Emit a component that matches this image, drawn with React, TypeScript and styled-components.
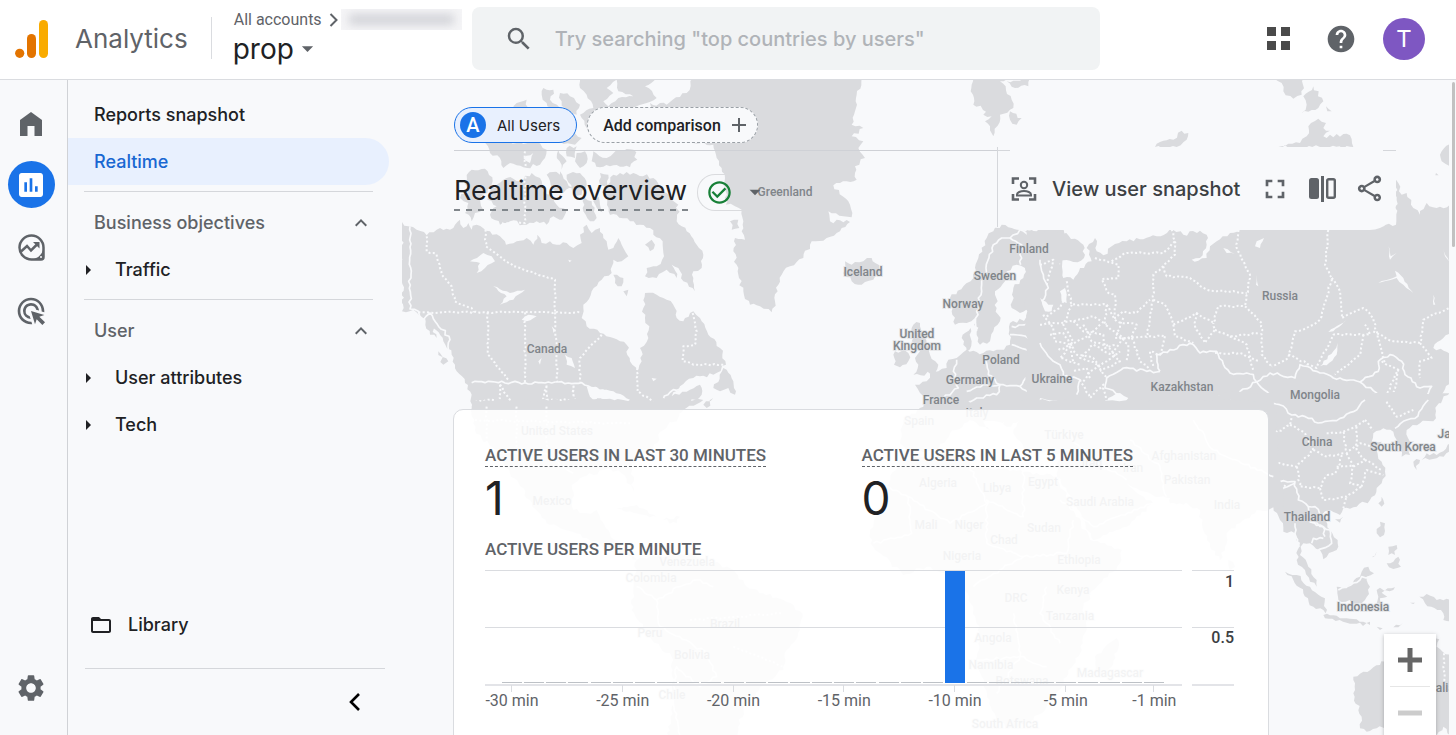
import React from 'react';
import styled, { createGlobalStyle, css } from 'styled-components';
import {
  MdAdd,
  MdAdsClick,
  MdArrowDropDown,
  MdArrowRight,
  MdCheckCircleOutline,
  MdExpandLess,
  MdFolderOpen,
  MdFullscreen,
  MdHelp,
  MdInsertChart,
  MdOutlineShare,
  MdSearch,
  MdSettings,
} from 'react-icons/md';

const color = {
  ink: '#202124',
  muted: '#5f6368',
  line: '#dadce0',
  water: '#f8f9fb',
  land: '#dadbde',
  blue: '#1a73e8',
  tint: '#e8f0fe',
};

const brandFont = "'Google Sans', Inter, sans-serif";
const textFont = 'Roboto, sans-serif';

const GlobalStyle = createGlobalStyle`
  *, *::before, *::after { box-sizing: border-box; }
  body {
    margin: 0;
    overflow: hidden;
    background: ${color.water};
    color: ${color.ink};
    font-family: ${textFont};
  }
  button, input { font: inherit; color: inherit; }
  button { border: 0; padding: 0; background: none; cursor: pointer; }
  a { color: inherit; text-decoration: none; }
  h1, h2, h3, p, ul { margin: 0; padding: 0; font-weight: inherit; list-style: none; }
  svg { display: block; flex: none; }
`;

/* ---------- map ---------- */

type Point = [number, number];

const parse = (s: string): Point[] => s.split(' ').map((p) => p.split(',').map(Number) as Point);

/* Breaks long straight edges into small irregular steps so coasts look natural. */
const jag = (points: Point[], amount: number): Point[] => {
  const out: Point[] = [];
  points.forEach((a, i) => {
    out.push(a);
    const b = points[i + 1];
    if (!b) return;
    const dx = b[0] - a[0];
    const dy = b[1] - a[1];
    const len = Math.hypot(dx, dy);
    const steps = Math.min(40, Math.floor(len / 10));
    for (let k = 1; k < steps; k += 1) {
      const x = a[0] + (dx * k) / steps;
      const y = a[1] + (dy * k) / steps;
      const n = Math.sin(x * 12.9898 + y * 78.233) * 43758.5453;
      const off = (n - Math.floor(n) - 0.5) * amount;
      out.push([x - (dy / len) * off, y + (dx / len) * off]);
    }
  });
  return out;
};

const shape = (s: string, amount = 12) => {
  const p = parse(s);
  return `M${jag([...p, p[0]], amount).map((q) => q.map(Math.round).join(' ')).join('L')}Z`;
};
const line = (s: string, amount = 6) =>
  `M${jag(parse(s), amount).map((q) => q.map(Math.round).join(' ')).join('L')}`;

interface Region {
  origin: Point;
  land: string[];
  water?: string[];
  borders?: string[];
  dotted?: string[];
}

const regions: Region[] = [
  {
    origin: [400, 78],
    land: [
      '6,432 25,445 50,455 80,472 110,455 150,455 165,440 180,425 190,450 205,435 215,455 230,440 270,460 300,475 318,500 350,490 380,480 400,500 412,470 425,495 450,490 470,500 500,495 520,510 545,495 540,470 560,440 575,465 600,450 610,480 625,515 640,510 655,480 670,510 685,535 665,550 640,545 635,585 605,605 575,640 550,680 545,720 560,745 600,765 640,780 680,800 690,850 715,875 725,850 720,810 745,780 748,745 735,720 730,690 735,645 770,650 800,665 825,690 830,720 850,730 880,700 900,720 925,770 960,810 978,860 940,890 880,900 840,925 815,955 870,935 900,920 905,950 870,975 840,990 830,1030 225,1030 215,990 215,950 195,915 170,880 155,830 130,790 100,750 60,715 40,695 6,700',
      '190,310 215,275 255,272 278,310 262,345 240,360 250,395 225,405 215,430 195,405 205,375 180,360 205,335',
      '275,330 320,300 360,310 395,285 420,300 430,340 455,350 470,380 500,395 490,425 460,415 440,440 410,430 380,440 330,430 300,440 270,410 290,385 262,365',
      '250,190 300,180 350,195 410,190 440,215 420,260 370,268 330,255 310,270 300,240 270,225',
      '350,75 380,65 385,90 350,100 340,85',
      '430,30 460,35 450,65 480,90 460,110 440,75 425,50',
      '480,45 510,55 540,80 530,110 500,100 485,70',
      '440,125 500,115 520,160 545,180 525,200 470,190 450,160',
      '500,210 530,205 525,240 500,235',
      '530,225 555,220 560,255 540,270 525,250',
      '580,220 620,240 650,215 700,215 712,245 690,268 640,262 600,268 575,250',
      '475,215 500,250 485,275 470,240',
      '440,290 480,280 500,310 520,330 490,345 455,330',
      '500,290 540,285 560,320 545,350 520,345',
      '600,285 625,290 620,330 600,320',
      '540,0 780,0 735,25 770,60 740,75 700,90 690,130 650,190 600,185 560,150 540,110 580,90 560,50 540,30',
      '640,290 700,285 760,300 800,345 835,380 830,430 860,460 890,500 910,530 905,570 880,580 885,640 850,610 835,570 815,560 830,600 800,575 770,600 735,595 740,570 770,565 792,535 788,490 760,470 750,450 720,440 690,430 650,410 600,400 580,370 610,340',
      '545,350 575,370 590,420 570,430 550,400',
      '735,500 755,485 765,500 750,520',
      '640,590 670,600 665,625 645,615',
      '670,640 685,635 680,655',
      '940,930 970,870 1000,910 1005,950 985,930 960,940',
      '75,720 95,740 110,780 90,770',
      '115,820 145,850 130,860',
      '910,980 940,960 920,990',
    ],
    water: [
      '210,550 250,525 275,535 285,550 255,570 230,585 240,555',
      '280,625 330,645 375,635 340,665 300,680 320,655',
      '495,830 515,840 525,870 500,860',
      '365,725 385,710 410,715 380,730',
      '560,925 640,940 690,965 670,985 640,965 590,960 620,990 580,975',
      '620,30 650,5 655,40 700,55 655,60 625,85 610,70 640,45',
      '480,440 500,400 525,410 520,450 500,470',
      '590,330 615,350 640,440 615,430 600,380',
      '370,240 400,225 390,255',
      '455,210 470,240 480,290 460,270',
      '455,745 465,755 460,765',
      '415,850 425,840 420,860',
      '755,900 770,902 760,910',
      '505,545 515,548 508,553',
    ],
    borders: [
      '30,445 30,693 55,700 70,725 90,705 150,785 145,815',
      '215,914 545,914 575,930 640,950',
      '650,975 700,985 770,978 820,935 860,925',
    ],
    dotted: [
      '80,475 80,520 110,530 125,590 155,625 165,670 215,690 220,703',
      '55,703 545,703',
      '256,455 258,505 340,565 465,605 465,703',
      '263,703 264,830 325,905',
      '375,703 375,912',
      '465,703 472,912',
      '605,770 540,840 540,912',
      '375,220 375,435 300,435',
      '878,705 890,760 885,800 850,805 848,850 880,860 975,860',
      '712,870 712,940 765,975',
      '300,920 300,965 220,970',
      '300,920 340,985 420,985 440,920 440,985',
      '440,965 520,965 520,920 525,996',
    ],
  },
  {
    origin: [700, 78],
    land: [
      '-20,0 -40,45 -100,80 -150,75 -100,130 -60,190 40,200 50,240 65,270 75,300 78,380 105,385 125,395 130,430 125,460 135,485 105,480 100,520 110,560 115,590 130,640 150,680 180,685 215,703 225,670 235,620 245,590 270,565 310,540 335,490 380,480 420,460 450,432 390,430 385,400 430,415 455,418 450,380 400,322 440,310 470,305 465,265 495,240 475,210 490,190 455,175 490,150 455,140 465,100 470,50 485,0',
      '90,430 115,425 118,450 95,455',
      '435,550 455,560 465,552 490,550 515,540 545,580 520,605 485,620 455,610 430,585',
      '820,0 930,0 900,10 935,65 940,90 900,110 880,175 855,130 875,115 850,110 870,100 820,80 815,20',
      '930,100 965,120 950,140 930,125',
      '920,10 990,0 985,25 945,30',
      '750,660 790,625 820,600 835,540 860,480 880,460 905,440 935,450 985,460 1090,450 1090,1030 685,1030 690,960 660,945 645,920 680,910 690,885 715,880 740,870 745,845 770,840 800,815 850,825 900,815 930,800 930,735 1000,715 1040,700 1010,690 960,705 935,690 940,630 970,600 975,570 950,560 920,580 915,610 885,640 890,690 900,730 880,760 870,790 840,800 830,760 825,720 800,735 765,740 755,700',
      '788,770 812,750 815,790 800,822 790,800',
      '640,740 660,735 665,765 680,800 690,830 715,860 705,885 640,890 655,860 645,840 660,820 635,790',
      '585,820 625,825 625,850 600,868 582,860',
    ],
    water: [
      '1005,475 1020,460 1035,480 1020,490',
      '1020,670 1060,665 1055,690 1035,690',
      '990,960 1040,965 1080,980 1080,996 1010,996',
    ],
    borders: [
      '830,760 830,700 845,620 880,500 905,480 930,480 965,500 962,560',
      '930,480 960,455 1000,485 1020,500 1035,560 1050,630 1020,690',
      '770,845 760,880 775,930 730,960',
      '855,830 865,890 900,920 960,925 1005,870 990,820 935,800',
      '1005,870 1060,860',
      '930,770 985,780 1000,800 1035,790',
      '935,745 1000,740 1000,715',
      '800,940 850,920 900,920 890,950 830,960 790,975',
      '960,925 1010,960 980,975 900,985',
    ],
    dotted: ['1010,740 1045,770 1080,720', '1035,530 1080,560'],
  },
  {
    origin: [1040, 78],
    land: [
      '-40,456 60,458 130,500 132,540 100,552 40,540 60,560 70,600 100,605 120,570 155,550 140,510 165,480 170,520 190,532 215,505 260,490 350,475 400,456 430,470 480,458 500,470 500,500 480,540 455,545 475,548 500,540 510,505 530,490 570,465 600,456 700,440 870,440 1068,440 1068,305 1085,350 1100,345 1120,390 1140,410 1160,375 1190,390 1240,380 1240,750 1180,810 1240,830 1240,900 1200,950 1180,1030 -40,1030',
      '700,0 790,0 785,50 760,62 730,40 725,15',
      '790,55 820,25 850,70 835,90 785,105 800,80',
      '858,85 875,100 862,100',
      '345,207 360,192 400,185 425,158 445,165 440,185 410,207',
      '715,207 745,197 780,195 800,175 805,145 835,122 858,135 850,150 870,158 850,175 930,172 940,207',
      '1205,220 1230,198 1230,265 1205,250',
      '1188,285 1196,292 1186,292',
    ],
    water: [
      '650,490 672,480 660,510 645,505',
      '550,510 585,528 560,525',
      '840,865 880,820 893,795 890,830 860,862',
      '1065,578 1090,600 1120,645 1090,620 1070,600 1015,615 1070,595',
      '865,762 920,725 880,760',
      '60,640 75,630 80,675 65,670',
      '0,660 25,680 40,680 35,700 15,700',
      '495,955 555,953 510,960 505,978',
      '205,960 240,945 265,960 240,996 195,996',
      '0,960 60,970 100,985 90,996 0,996',
      '648,590 655,625 648,620',
      '1045,505 1052,535 1070,525 1050,545',
      '1180,650 1186,680 1180,680',
      '1210,510 1227,550 1215,535',
      '215,460 232,458 225,480',
    ],
    borders: [
      '0,545 10,590 25,630 5,670',
      '0,795 40,850 60,860 70,895 120,905 110,950',
      '360,880 350,830 390,815 450,795 480,825 530,820 570,885 640,890 650,912',
      '360,880 320,880 250,870 200,900 195,930 240,950',
      '650,912 600,940 570,990',
      '650,912 690,950 695,980 740,995',
      '650,912 690,885 765,900 780,860 830,880 880,900 960,912 1015,880 1015,850 1050,830 1085,850 1095,890 1140,930 1175,925 1150,980',
      '960,912 1010,945 960,965 920,990',
    ],
    dotted: [
      '165,540 235,560 235,600 185,603 205,645 225,650 225,720 250,700 290,705 330,665',
      '215,550 260,525 370,525 405,490 395,455',
      '405,490 405,530 340,590 340,665 320,780',
      '370,565 380,595 450,600 500,635 620,645',
      '340,665 375,680 400,740 470,705 520,735 535,685 615,685',
      '595,456 590,510 630,590 615,685',
      '615,685 665,735 665,830 695,865',
      '865,456 855,560 875,600 860,660 840,725 800,750 765,760 745,840 695,865',
      '875,600 900,640 905,720 970,690 1000,720 1035,860',
      '400,740 405,775 460,795',
      '470,705 465,745 495,795 525,755 520,735',
      '525,755 570,775 660,765',
      '570,775 620,800 640,880',
      '525,825 600,825 660,850',
      '745,830 830,870 880,770 990,770 975,740',
      '970,770 960,830 885,890',
      '1000,760 1060,790 1140,795 1150,725 1227,690',
      '1140,795 1175,840 1140,850 1140,900',
      '1025,850 1075,875 1040,950 1060,990',
      '80,610 95,680 200,680 195,740 250,780 375,775',
      '0,740 100,730 160,715 200,740',
      '95,680 70,740 100,790 60,840 120,860',
      '130,740 155,790 200,800 240,850 180,880',
      '250,780 215,830 160,800 120,840 180,860',
      '275,780 300,850 325,870',
      '375,775 360,830 330,820 340,870',
      '20,715 60,690 80,650',
      '100,730 130,760 190,770 195,810 230,800',
      '30,770 70,765 110,830 160,840 200,900',
      '120,905 150,960 190,920 200,980',
      '1075,875 1060,960 1130,990',
      '0,560 40,545 20,620',
      '200,680 230,730 290,740 275,780 225,780',
      '10,710 40,750 45,790 90,800 100,850',
      '150,900 140,870 100,880',
      '130,910 150,880 200,850 240,820',
      '180,740 150,770 110,790 50,820',
      '250,720 230,770 265,800 260,850',
    ],
  },
  {
    origin: [1180, 400],
    land: [
      '-30,-20 810,-20 765,20 740,45 720,70 680,90 690,125 690,165 665,170 650,120 640,95 610,85 580,100 575,125 605,125 590,150 605,185 615,215 605,250 570,300 530,320 490,325 480,345 450,330 425,345 450,390 473,420 470,450 430,478 420,450 390,430 370,430 360,465 385,500 410,540 410,560 390,545 375,510 350,480 358,440 345,400 310,395 300,360 280,320 270,300 240,310 -30,310',
      '315,515 350,525 390,560 435,595 437,640 400,620 370,580 340,540',
      '430,645 500,655 570,665 570,675 500,668 435,655',
      '470,560 500,565 540,530 545,515 565,500 582,520 560,530 570,560 555,600 530,610 475,600',
      '590,570 645,562 640,570 605,578 622,590 600,595 610,620 590,610',
      '600,365 615,370 612,405 600,412 590,400',
      '620,490 640,485 655,470 663,500 640,507',
      '625,440 650,435 645,465 625,465',
      '575,472 590,455 582,470',
      '718,590 740,582 770,600 820,600 820,668 790,660 790,640 735,610',
      '520,830 550,815 600,795 640,760 700,725 730,740 765,715 778,718 770,740 820,770 820,1030 790,980 770,1005 700,1010 620,975 590,985 560,995 540,985 545,950 520,880',
      '595,310 605,290 610,300 605,320',
      '465,358 490,350 480,368',
      '700,185 720,180 710,210',
      '725,180 740,160 770,165 820,120 820,155 770,175',
      '590,680 608,685 600,690',
      '640,682 668,670 655,682',
      '690,608 705,608 700,612',
    ],
    borders: [
      '265,8 310,18 335,45 385,55 425,68 480,55 520,35 555,0',
      '645,85 680,60 705,55 745,0',
      '265,265 300,245 345,245 355,300 385,320 405,320 430,350',
      '385,320 390,365 430,380 435,410',
      '390,365 450,390 455,430 410,455',
      '345,370 345,400 358,440',
      '395,430 400,415 430,415',
      '475,570 500,560 540,540 545,530 570,530',
      '150,0 155,20 175,15',
      '260,285 300,270 345,250',
    ],
    dotted: [
      '265,110 330,75 335,50',
      '330,75 370,95 400,150 350,200 265,185',
      '350,200 360,260 420,265 440,225',
      '400,150 440,170 490,160 465,220 440,225',
      '420,265 430,300 500,290 545,260',
      '440,100 490,95 500,160 540,130 580,140',
      '490,95 525,80 555,60',
      '500,160 520,200 510,250 545,260',
      '520,200 560,180 605,210',
      '545,260 560,210 610,225',
      '490,325 500,290',
      '555,60 580,90',
      '530,80 530,150 555,180',
      '620,5 650,50 700,30',
      '470,200 520,195',
      '792,760 792,860',
      '265,300 300,280 320,250',
    ],
  },
  {
    origin: [450, 400],
    land: [
      '65,20 75,0 760,0 700,30 640,90 600,150 545,190 550,275 515,220 480,205 400,230 365,255 370,330 410,340 440,330 480,400 510,440 560,480 470,440 380,400 290,370 240,300 180,220 140,160 75,90',
      '500,325 560,315 620,350 560,340',
      '640,360 690,350 680,370',
      '560,480 620,470 720,460 850,510 890,560 1000,600 1057,640 1050,690 1010,750 1000,810 930,860 880,930 850,1030 650,1030 670,900 665,770 600,710 545,630 550,580',
    ],
    borders: [
      '560,560 620,600 690,560 740,540 790,560',
      '620,600 630,680 690,710',
      '690,710 770,760 800,830 750,860 680,800 670,900 690,1005',
      '140,160 290,160 370,220',
    ],
    dotted: ['110,20 110,130', '200,20 200,140', '290,20 290,150', '75,60 540,70', '720,660 1000,640', '850,740 1000,800'],
  },
  {
    origin: [840, 400],
    land: [
      '180,130 190,60 250,20 260,0 380,0 450,90 390,60 330,100 290,150 200,150',
      '460,0 1300,0 1330,320 1250,330 1200,370 1160,400 1160,430 1140,480 1110,440 1090,390 1080,330 1010,295 960,290 890,265 860,250 900,285 940,310 860,380 760,420 700,300 650,220 660,160 560,150 520,100 540,60 500,80',
      '180,180 300,165 380,170 390,200 440,205 520,210 640,230 670,270 700,330 750,420 845,450 840,490 770,560 730,620 740,690 720,760 680,830 640,900 580,960 510,985 470,960 450,900 410,800 420,700 400,620 370,560 330,530 260,500 190,525 100,440 90,400 110,330 140,260',
      '765,770 830,715 835,745 800,830 770,820',
      '1165,480 1185,500 1170,510',
    ],
    borders: [
      '140,260 205,290 330,370 440,310 390,200',
      '550,210 550,350 440,300 440,430',
      '205,290 215,400 100,430',
      '440,430 550,470 680,460 700,360',
      '550,470 480,510 400,560',
      '620,560 600,640 660,730',
      '410,780 540,770 620,800',
      '660,300 760,380 940,310',
      '680,100 760,180 860,240',
      '870,120 960,200 980,290',
      '1060,60 1120,150 1300,230',
      '520,640 540,770 470,880',
    ],
  },
];

const labels: [number, number, string][] = [
  [785, 196, 'Greenland'],
  [863, 276, 'Iceland'],
  [1029, 253, 'Finland'],
  [995, 280, 'Sweden'],
  [963, 308, 'Norway'],
  [917, 338, 'United'],
  [917, 350, 'Kingdom'],
  [1001, 364, 'Poland'],
  [970, 384, 'Germany'],
  [941, 404, 'France'],
  [1052, 383, 'Ukraine'],
  [1280, 300, 'Russia'],
  [1182, 391, 'Kazakhstan'],
  [1315, 399, 'Mongolia'],
  [547, 353, 'Canada'],
  [1317, 446, 'China'],
  [1403, 451, 'South Korea'],
  [1454, 438, 'Japan'],
  [1307, 521, 'Thailand'],
  [1363, 611, 'Indonesia'],
  [1431, 692, 'Australia'],
  [557, 435, 'United States'],
  [552, 505, 'Mexico'],
  [687, 566, 'Venezuela'],
  [651, 582, 'Colombia'],
  [725, 628, 'Brazil'],
  [650, 637, 'Peru'],
  [692, 659, 'Bolivia'],
  [672, 699, 'Chile'],
  [919, 425, 'Spain'],
  [977, 417, 'Italy'],
  [1064, 439, 'Türkiye'],
  [1092, 467, 'Iraq'],
  [1133, 472, 'Iran'],
  [1184, 460, 'Afghanistan'],
  [1187, 484, 'Pakistan'],
  [1227, 509, 'India'],
  [938, 487, 'Algeria'],
  [997, 492, 'Libya'],
  [1043, 486, 'Egypt'],
  [1100, 506, 'Saudi Arabia'],
  [926, 529, 'Mali'],
  [969, 529, 'Niger'],
  [1004, 544, 'Chad'],
  [1044, 532, 'Sudan'],
  [962, 560, 'Nigeria'],
  [1079, 564, 'Ethiopia'],
  [1073, 594, 'Kenya'],
  [1016, 602, 'DRC'],
  [1070, 620, 'Tanzania'],
  [993, 642, 'Angola'],
  [991, 669, 'Namibia'],
  [1022, 685, 'Botswana'],
  [1110, 677, 'Madagascar'],
  [1005, 728, 'South Africa'],
];

const MapSvg = styled.svg`
  position: absolute;
  inset: 0 7px 0 0;
  width: calc(100% - 7px);
  height: 100%;
  pointer-events: none;

  text {
    font: 500 12px ${textFont};
    fill: #80858a;
    text-anchor: middle;
    stroke: ${color.land};
    stroke-width: 2px;
    stroke-opacity: 0.6;
    paint-order: stroke;
  }
`;

const WorldMap = () => (
  <MapSvg viewBox="402 80 1047 655" preserveAspectRatio="xMinYMin slice" aria-hidden="true">
    {regions.map((r, i) => (
      <g key={i} transform={`translate(${r.origin[0]} ${r.origin[1]}) scale(0.33333)`}>
        <path d={r.land.map((s) => shape(s)).join('')} fill={color.land} fillRule="nonzero" />
        {r.water?.map((s) => <path key={s} d={shape(s, 6)} fill={color.water} />)}
        <g fill="none" stroke={color.water} strokeLinejoin="round">
          {r.borders?.map((s) => <path key={s} d={line(s, 9)} strokeWidth={5} />)}
          {r.dotted?.map((s) => <path key={s} d={line(s, 5)} strokeWidth={6} strokeDasharray="6 7" />)}
        </g>
      </g>
    ))}
    {labels.map(([x, y, t]) => (
      <text key={`${t}${y}`} x={x} y={y}>{t}</text>
    ))}
  </MapSvg>
);

/* ---------- header ---------- */

const Page = styled.div`
  display: flex;
  flex-direction: column;
  height: 100vh;
`;

const Header = styled.header`
  display: flex;
  align-items: center;
  flex: none;
  height: 80px;
  padding: 0 31px 2px 15px;
  background: #fff;
  border-bottom: 1px solid ${color.line};
`;

const Brand = styled.a`
  display: flex;
  align-items: center;
  gap: 26px;
  font: 400 26px/36px ${brandFont};
  color: ${color.muted};
`;

const Account = styled.div`
  display: flex;
  flex-direction: column;
  width: 261px;
  height: 60px;
  margin-left: 23px;
  position: relative;

  &::before {
    content: '';
    position: absolute;
    top: 8px;
    left: 0;
    height: 42px;
    border-left: 1px solid ${color.line};
  }
`;

const Crumbs = styled.div`
  display: flex;
  align-items: center;
  height: 22px;
  padding-left: 23px;
  font-size: 16px;
  color: ${color.muted};

  svg { margin: 0 3px 0 7px; }
`;

const HiddenName = styled.span`
  width: 121px;
  height: 21px;
  overflow: hidden;
  background: #f5f5f7;

  &::before {
    content: '';
    display: block;
    height: 11px;
    margin: 5px 8px;
    background: #d2d3d8;
    filter: blur(5px);
  }
`;

const PropertyButton = styled.button`
  display: flex;
  align-items: center;
  align-self: flex-start;
  padding-left: 22px;
  font: 400 28px/36px ${brandFont};

  svg { color: ${color.muted}; }
`;

const SearchBox = styled.label`
  display: flex;
  align-items: center;
  flex: 0 1 628px;
  height: 63px;
  padding: 0 32px;
  gap: 21px;
  border-radius: 8px;
  background: #f1f3f4;
  color: ${color.muted};
`;

const SearchInput = styled.input`
  flex: 1;
  min-width: 0;
  padding: 0;
  border: 0;
  outline: 0;
  background: transparent;
  font: 500 20px ${brandFont};

  &::placeholder { color: #b0b3b8; opacity: 1; }
`;

const HeaderActions = styled.div`
  display: flex;
  align-items: center;
  gap: 26px;
  margin-left: auto;
  color: ${color.muted};

  button:first-child { margin-right: 8px; }
`;

const Avatar = styled.button`
  width: 42px;
  height: 42px;
  border-radius: 50%;
  background: #7e57c2;
  font: 400 24px ${textFont};
  color: #fff;
`;

/* ---------- rail and navigation ---------- */

const Body = styled.div`
  display: flex;
  flex: 1;
  min-height: 0;
`;

const Rail = styled.nav`
  display: flex;
  flex-direction: column;
  align-items: center;
  gap: 16px;
  flex: none;
  width: 68px;
  padding: 18px 5px 24px 0;
  border-right: 1px solid #d0d2d6;
`;

const RailButton = styled.button<{ $active?: boolean; $last?: boolean }>`
  display: grid;
  place-items: center;
  width: 47px;
  height: 47px;
  border-radius: 50%;
  color: ${(p) => (p.$active ? '#fff' : color.muted)};
  background: ${(p) => (p.$active ? color.blue : 'transparent')};
  ${(p) => p.$last && css`margin-top: auto;`}
`;

const SideNav = styled.nav`
  display: flex;
  flex-direction: column;
  flex: none;
  width: 334px;
  padding-top: 11px;
  font: 500 18px ${brandFont};
`;

const NavLink = styled.a<{ $active?: boolean }>`
  display: flex;
  align-items: center;
  height: 47px;
  margin-right: 13px;
  padding-left: 26px;
  border-radius: 0 24px 24px 0;
  color: ${(p) => (p.$active ? '#1967d2' : color.ink)};
  background: ${(p) => (p.$active ? color.tint : 'transparent')};
`;

const NavSection = styled.section`
  margin: 6px 29px 0 16px;
  padding-top: 7px;
  border-top: 1px solid #d5d7db;
`;

const SectionHead = styled.button`
  display: flex;
  align-items: center;
  justify-content: space-between;
  width: 100%;
  height: 47px;
  padding-left: 10px;
  color: ${color.muted};
`;

const Branch = styled.button`
  display: flex;
  align-items: center;
  gap: 15px;
  width: 100%;
  height: 47px;
  margin-left: -8px;
`;

const LibraryLink = styled.a`
  display: flex;
  align-items: center;
  gap: 15px;
  height: 47px;
  margin: auto 17px 0;
  padding-left: 4px;
`;

const NavFoot = styled.div`
  display: flex;
  justify-content: flex-end;
  align-items: center;
  height: 67px;
  margin: 20px 17px 0;
  padding-right: 24px;
  border-top: 1px solid #d5d7db;
`;

/* ---------- report ---------- */

const Main = styled.main`
  position: relative;
  flex: 1;
  min-width: 0;
  overflow: hidden;
  padding: 27px 60px 0 52px;
`;

const ScrollThumb = styled.div`
  position: absolute;
  top: 2px;
  right: 1px;
  width: 3px;
  height: 165px;
  border-radius: 2px;
  background: #c1c1c1;
`;

const Chips = styled.div`
  position: relative;
  display: flex;
  gap: 10px;
  height: 36px;
`;

const Chip = styled.button<{ $add?: boolean }>`
  display: flex;
  align-items: center;
  gap: ${(p) => (p.$add ? '6px' : '11px')};
  padding: ${(p) => (p.$add ? '0 6px 0 15px' : '0 16px 0 5px')};
  border: 1px ${(p) => (p.$add ? 'dashed #9aa0a6' : `solid ${color.blue}`)};
  border-radius: 18px;
  background: ${(p) => (p.$add ? color.water : color.tint)};
  font: ${(p) => (p.$add ? `500 16px ${textFont}` : `400 15px ${brandFont}`)};

  svg { color: ${color.muted}; }
`;

const ChipBadge = styled.span`
  display: grid;
  place-items: center;
  width: 26px;
  height: 26px;
  border-radius: 50%;
  background: ${color.blue};
  font: 500 20px ${textFont};
  color: #fff;
`;

const TitleBar = styled.div`
  position: relative;
  display: flex;
  align-items: flex-start;
  justify-content: space-between;
  margin-top: 7px;
  border-top: 1px solid #cfd1d6;
`;

const TitleGroup = styled.div`
  display: flex;
  align-items: center;
  gap: 8px;
  padding-top: 22px;
`;

const Title = styled.h1`
  height: 38px;
  padding-right: 2px;
  font: 400 27px/36px ${brandFont};
  background: repeating-linear-gradient(90deg, #80868b 0 6px, transparent 6px 12px) 0 100% / 100% 2px no-repeat;
`;

const StatusButton = styled.button`
  display: flex;
  align-items: center;
  gap: 9px;
  height: 37px;
  padding-left: 8px;
  border: solid #dadbde;
  border-width: 1px 0 1px 1px;
  border-radius: 18px 0 0 18px;
  color: ${color.muted};
`;

const Toolbar = styled.div`
  position: relative;
  display: flex;
  align-items: center;
  width: 399px;
  height: 83px;
  margin-top: -4px;
  padding: 0 11px 0 13px;
  border-radius: 0 0 26px 26px;
  background:
    linear-gradient(#d5d7db, #d5d7db) 0 3px / 13px 1px no-repeat,
    linear-gradient(#d5d7db, #d5d7db) 100% 3px / 13px 1px no-repeat,
    ${color.water};
  color: ${color.muted};

  &::before {
    content: '';
    position: absolute;
    top: 0;
    left: 0;
    height: 80px;
    border-left: 1px solid #d5d7db;
  }
`;

const SnapshotButton = styled.button`
  display: flex;
  align-items: center;
  gap: 15px;
  margin-right: auto;
  padding-left: 1px;
  font: 500 20px ${brandFont};
  color: #3c4043;

  svg { color: ${color.muted}; }
`;

const ToolIcons = styled.div`
  display: flex;
  align-items: center;
  gap: 18px;
`;

const Card = styled.section`
  position: relative;
  margin: 179px 127px 0 -1px;
  height: 400px;
  padding: 35px 34px 0 31px;
  border: 1px solid ${color.line};
  border-radius: 10px;
  background: rgba(255, 255, 255, 0.9);
`;

const Metrics = styled.div`
  display: grid;
  grid-template-columns: 1fr 1fr;
  column-gap: 4px;
`;

const Label = styled.h2<{ $help?: boolean }>`
  display: inline-block;
  font: 500 17px/21px ${textFont};
  color: ${color.muted};
  ${(p) => p.$help && css`border-bottom: 1px dashed ${color.muted};`}
`;

const Value = styled.p`
  margin: 4px 0 14px;
  font: 400 46px/54px ${brandFont};
`;

const Chart = styled.svg`
  width: 100%;
  height: auto;
  margin-top: 10px;
  overflow: visible;

  text { font: 400 16px ${textFont}; fill: ${color.muted}; text-anchor: middle; }
  .axis { font-weight: 500; fill: #3c4043; text-anchor: end; }
`;

const ZoomControls = styled.div`
  position: absolute;
  right: 20px;
  top: 554px;
  display: flex;
  flex-direction: column;
  width: 52px;
  background: #fff;
  box-shadow: 0 1px 4px rgba(0, 0, 0, 0.25);
`;

const ZoomButton = styled.button`
  display: grid;
  place-items: center;
  height: 52px;
  color: #666;

  & + & { margin: 0 6px; border-top: 1px solid #e6e6e6; color: #ccc; }
`;

const Logo = () => (
  <svg width="34" height="38" viewBox="0 0 34 38" aria-hidden="true">
    <rect x="24" y="0" width="9" height="38" rx="4.5" fill="#f9ab00" />
    <rect x="12" y="14" width="9" height="24" rx="4.5" fill="#e37400" />
    <circle cx="4.7" cy="33.3" r="4.6" fill="#e37400" />
  </svg>
);

const activity = Array.from({ length: 30 }, (_, i) => ({ minute: 30 - i, users: 30 - i === 10 ? 1 : 0 }));
const barX = (minute: number) => 27 + ((30 - minute) * 443) / 20;

const UsersChart = () => (
  <Chart viewBox="0 0 749 144" role="img" aria-label="Active users per minute">
    {[0, 57, 114].map((y) => (
      <g key={y} fill={y === 114 ? '#e3e4e8' : '#dadce0'}>
        <rect x="0" y={y} width="697" height={y === 114 ? 2 : 1} />
        <rect x="707" y={y} width="42" height={y === 114 ? 2 : 1} />
      </g>
    ))}
    {activity.map(({ minute, users }) => (
      <rect
        key={minute}
        x={Math.round(barX(minute)) - 10}
        y={users ? 1 : 112}
        width="20"
        height={users ? 112 : 1}
        fill={users ? color.blue : '#bdc1c6'}
      />
    ))}
    {[30, 25, 20, 15, 10, 5, 1].map((m) => (
      <g key={m}>
        <rect x={Math.round(barX(m)) - 1} y="115" width="1" height="7" fill="#dadce0" />
        <text x={barX(m)} y="136">{`-${m} min`}</text>
      </g>
    ))}
    <text className="axis" x="749" y="17">1</text>
    <text className="axis" x="749" y="73">0.5</text>
  </Chart>
);

const App = () => (
  <Page>
    <GlobalStyle />
    <Header>
      <Brand href="#home"><Logo />Analytics</Brand>
      <Account>
        <Crumbs>
          All accounts
          <svg width="9" height="14" viewBox="0 0 9 14" fill="none" stroke="currentColor" strokeWidth="2" aria-hidden="true">
            <path d="M1.500 1 7.500 7l-6 6" />
          </svg>
          <HiddenName />
        </Crumbs>
        <PropertyButton type="button">prop<MdArrowDropDown size={27} /></PropertyButton>
      </Account>
      <SearchBox>
        <MdSearch size={30} />
        <SearchInput aria-label="Search" placeholder={'Try searching "top countries by users"'} />
      </SearchBox>
      <HeaderActions>
        <button type="button" aria-label="Apps">
          <svg width="24" height="24" viewBox="0 0 24 24" fill="#4a4a4a">
            <path d="M0 0h9v9H0zM14 0h9v9h-9zM0 14h9v9H0zM14 14h9v9h-9z" />
          </svg>
        </button>
        <button type="button" aria-label="Help"><MdHelp size={32} /></button>
        <Avatar type="button" aria-label="Account">T</Avatar>
      </HeaderActions>
    </Header>
    <Body>
      <Rail aria-label="Sections">
        <RailButton type="button" aria-label="Home">
          <svg width="22" height="28" viewBox="0 -4 22 28" fill="currentColor">
            <path d="M11 0 22 8V24H14.500V14H7.500V24H0V8Z" />
          </svg>
        </RailButton>
        <RailButton type="button" aria-label="Reports" $active><MdInsertChart size={32} /></RailButton>
        <RailButton type="button" aria-label="Explore">
          <svg width="27" height="27" viewBox="0 0 27 27" fill="none" stroke="currentColor" strokeWidth="2.500">
            <path d="M13.500 1.500a12 12 0 1 0 0 24h9.500q2.500 0 2.500-2.500v-9.500a12 12 0 0 0-12-12Z" />
            <path d="M3 17.500 9 12l4 4.500 7-7" />
            <path d="M15 8h6.500v6.500Z" fill="currentColor" stroke="none" />
            <path d="M25 16v9h-9q7-2 9-9Z" fill="currentColor" stroke="none" />
            <circle cx="23" cy="23" r="1" fill="#f8f9fb" stroke="none" />
          </svg>
        </RailButton>
        <RailButton type="button" aria-label="Advertising"><MdAdsClick size={32} /></RailButton>
        <RailButton type="button" aria-label="Admin" $last><MdSettings size={32} /></RailButton>
      </Rail>
      <SideNav aria-label="Reports">
        <NavLink href="#snapshot">Reports snapshot</NavLink>
        <NavLink href="#realtime" $active aria-current="page">Realtime</NavLink>
        <NavSection>
          <SectionHead type="button">Business objectives<MdExpandLess size={24} /></SectionHead>
          <Branch type="button"><MdArrowRight size={24} /><span>Traffic</span></Branch>
        </NavSection>
        <NavSection>
          <SectionHead type="button">User<MdExpandLess size={24} /></SectionHead>
          <Branch type="button"><MdArrowRight size={24} /><span>User attributes</span></Branch>
          <Branch type="button"><MdArrowRight size={24} /><span>Tech</span></Branch>
        </NavSection>
        <LibraryLink href="#library"><MdFolderOpen size={24} />Library</LibraryLink>
        <NavFoot>
          <button type="button" aria-label="Collapse navigation">
            <svg width="13" height="18" viewBox="0 0 13 18" fill="none" stroke="#000" strokeWidth="2.600">
              <path d="M11 1 3 9l8 8" />
            </svg>
          </button>
        </NavFoot>
      </SideNav>
      <Main>
        <WorldMap />
        <Chips>
          <Chip type="button"><ChipBadge>A</ChipBadge>All Users</Chip>
          <Chip type="button" $add>Add comparison<MdAdd size={24} /></Chip>
        </Chips>
        <TitleBar>
          <TitleGroup>
            <Title>Realtime overview</Title>
            <StatusButton type="button" aria-label="Data quality">
              <MdCheckCircleOutline size={27} color="#188038" />
              <MdArrowDropDown size={26} />
            </StatusButton>
          </TitleGroup>
          <Toolbar>
            <SnapshotButton type="button">
              <svg width="26" height="24" viewBox="0 0 26 24" fill="none" stroke="currentColor" strokeWidth="2">
                <path d="M2 7V1.500h6M18 1.500h6V7M24 17v5.500h-6M8 22.500H2V17" strokeWidth="2.600" />
                <circle cx="13" cy="8" r="3.200" />
                <path d="M6 18.500v-1c0-2 3.500-3.500 7-3.500s7 1.500 7 3.500v1Z" />
              </svg>
              View user snapshot
            </SnapshotButton>
            <ToolIcons>
              <button type="button" aria-label="Full screen"><MdFullscreen size={32} /></button>
              <button type="button" aria-label="Compare">
                <svg width="27" height="26" viewBox="0 0 27 26" fill="currentColor">
                  <rect x="0" y="2" width="10" height="21" rx="2.500" />
                  <rect x="12" y="0" width="3" height="26" />
                  <rect x="18.200" y="3.200" width="7.600" height="18.600" rx="1.500" fill="none" stroke="currentColor" strokeWidth="2.400" />
                </svg>
              </button>
              <button type="button" aria-label="Share"><MdOutlineShare size={31} /></button>
            </ToolIcons>
          </Toolbar>
        </TitleBar>
        <Card>
          <Metrics>
            <div>
              <Label $help>ACTIVE USERS IN LAST 30 MINUTES</Label>
              <Value>1</Value>
            </div>
            <div>
              <Label $help>ACTIVE USERS IN LAST 5 MINUTES</Label>
              <Value>0</Value>
            </div>
          </Metrics>
          <Label as="h3">ACTIVE USERS PER MINUTE</Label>
          <UsersChart />
        </Card>
        <ZoomControls>
          <ZoomButton type="button" aria-label="Zoom in">
            <svg width="24" height="24" viewBox="0 0 24 24" fill="currentColor"><path d="M0 9.500h9.500V0h5v9.500H24v5h-9.500V24h-5v-9.500H0z" /></svg>
          </ZoomButton>
          <ZoomButton type="button" aria-label="Zoom out">
            <svg width="24" height="24" viewBox="0 0 24 24" fill="currentColor"><path d="M0 9.500h24v5H0z" /></svg>
          </ZoomButton>
        </ZoomControls>
        <ScrollThumb />
      </Main>
    </Body>
  </Page>
);

export default App;
